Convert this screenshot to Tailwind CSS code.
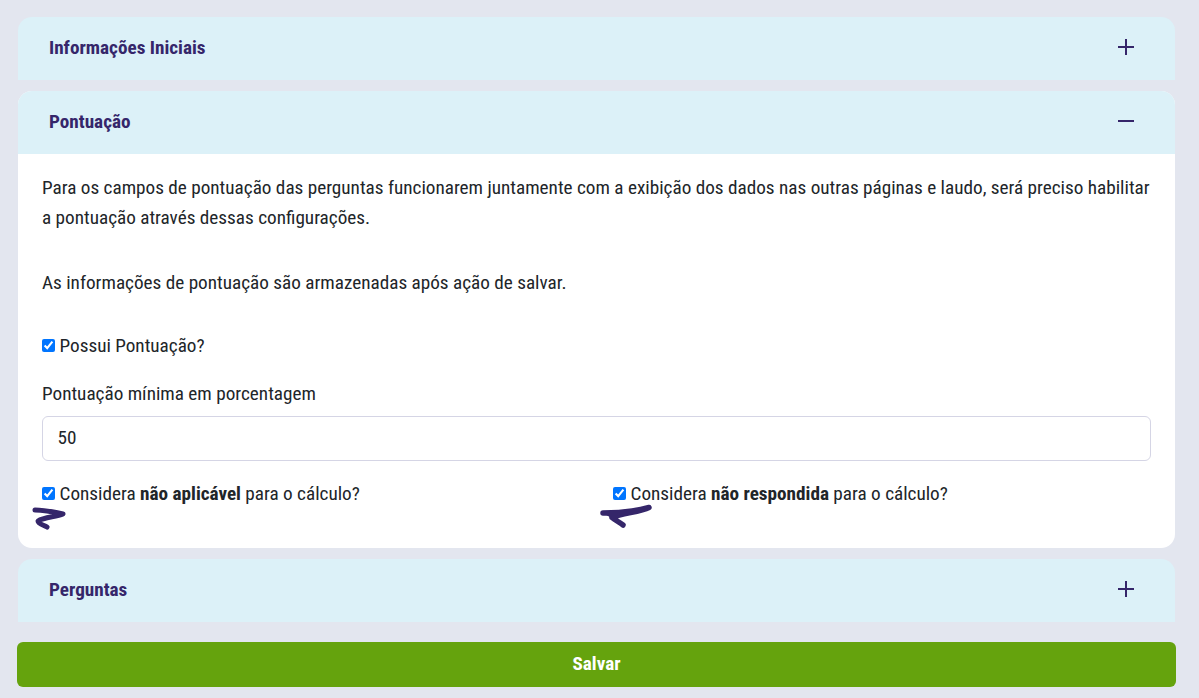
<!DOCTYPE html>
<html lang="pt-BR">
<head>
    <meta charset="UTF-8">
    <title>Pontuação</title>
    <script src="https://cdn.jsdelivr.net/npm/@tailwindcss/browser@4"></script>
</head>
<body class="bg-[#e3e6ef] h-[698px] overflow-hidden font-['Roboto',sans-serif] [font-stretch:condensed] text-[#212529]">
    <div class="relative pt-[17px] pl-[17px] pr-[23px]">
        <div class="mx-px flex flex-col gap-[11px]">
            <!-- Informações Iniciais -->
            <div class="bg-[#dcf1f8] rounded-t-[14px] h-[63px] pl-[31px] pr-[41px] pb-[3px] flex items-center justify-between">
                <h2 class="text-[19.2px] font-bold text-[#35266a] translate-y-px">Informações Iniciais</h2>
                <svg class="w-4 h-4" viewBox="0 0 16 16" fill="none" stroke="#35266a" stroke-width="2"><path d="M0 8h16M8 0v16"/></svg>
            </div>

            <!-- Pontuação -->
            <div class="bg-white rounded-[14px] overflow-hidden h-[457px]">
                <div class="bg-[#dcf1f8] h-[63px] pl-[31px] pr-[41px] pb-[3px] flex items-center justify-between">
                    <h2 class="text-[19.2px] font-bold text-[#35266a] translate-y-px">Pontuação</h2>
                    <svg class="w-4 h-4" viewBox="0 0 16 16" fill="none" stroke="#35266a" stroke-width="2"><path d="M0 8h16"/></svg>
                </div>
                <div class="px-[24px] pt-[19px] text-[19.2px] leading-[30px]">
                    <p>Para os campos de pontuação das perguntas funcionarem juntamente com a exibição dos dados nas outras páginas e laudo, será preciso habilitar a pontuação através dessas configurações.</p>
                    <p class="mt-[35px]">As informações de pontuação são armazenadas após ação de salvar.</p>
                    <label class="mt-[32px] flex items-center gap-[4.5px] h-[30px]">
                        <input type="checkbox" checked class="w-[13px] h-[13px] accent-[#0075ff]">
                        <span class="translate-y-px">Possui Pontuação?</span>
                    </label>
                    <div class="mt-[19px] h-[30px]">Pontuação mínima em porcentagem</div>
                    <input type="text" value="50" class="mt-[7px] block w-full h-[45px] bg-white border border-[#d5d5e5] rounded-[6px] pl-[14.5px] pr-[15px] pb-[2px] text-[19.2px]">
                    <div class="mt-[17px] grid grid-cols-2">
                        <label class="flex items-center gap-[4.5px] h-[30px]">
                            <input type="checkbox" checked class="w-[13px] h-[13px] accent-[#0075ff]">
                            <span class="translate-y-px">Considera <b>não aplicável</b> para o cálculo?</span>
                        </label>
                        <label class="flex items-center gap-[5px] h-[30px] ml-[16px]">
                            <input type="checkbox" checked class="w-[13px] h-[13px] accent-[#0075ff]">
                            <span class="translate-y-px">Considera <b>não respondida</b> para o cálculo?</span>
                        </label>
                    </div>
                </div>
            </div>

            <!-- Perguntas -->
            <div class="bg-[#dcf1f8] rounded-t-[14px] h-[63px] pl-[31px] pr-[41px] pb-[3px] flex items-center justify-between">
                <h2 class="text-[19.2px] font-bold text-[#35266a] translate-y-px">Perguntas</h2>
                <svg class="w-4 h-4" viewBox="0 0 16 16" fill="none" stroke="#35266a" stroke-width="2"><path d="M0 8h16M8 0v16"/></svg>
            </div>
        </div>

        <button class="mt-[20px] w-full h-[45px] bg-[#65a30d] rounded-[6px] text-white text-[19.2px] font-bold">Salvar</button>

        <!-- rabiscos sobre a captura -->
        <svg class="absolute left-0 top-0 w-[1199px] h-[698px] pointer-events-none" viewBox="0 0 1199 698" fill="none" stroke="#35266a" stroke-linecap="round" stroke-linejoin="round">
            <path stroke-width="5" d="M35 510C44 510 54 512 63 514C56 517 44 517 38 521C38 524 44 525 47 527"/>
            <path fill="#35266a" stroke-width="5.5" d="M603 513C618 513 636 511 649 507.500C640 512 622 513 612 517.500C615 520 619 522 623 525"/>
        </svg>
    </div>
</body>
</html>
